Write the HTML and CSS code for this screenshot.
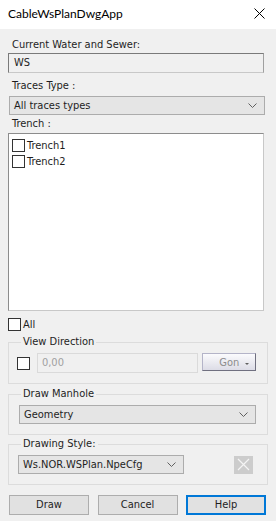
FILE: index.html
```html
<!DOCTYPE html>
<html lang="en">

<head>
    <meta charset="UTF-8">
    <meta name="viewport" content="width=device-width, initial-scale=1.0">
    <title>CableWsPlanDwgApp</title>
    <link rel="stylesheet" href="styles.css">
</head>

<body>
    <div id="window">
        <div class="titlebar">
            <span class="title">CableWsPlanDwgApp</span>
            <svg class="close" width="11" height="11" viewBox="0 0 11 11">
                <path d="M0.5 0.5 L10.5 10.5 M10.5 0.5 L0.5 10.5" stroke="#000" stroke-width="1" fill="none" />
            </svg>
        </div>

        <div id="content">
            <div class="label first">Current Water and Sewer:</div>
            <div class="textbox">WS</div>

            <div class="label">Traces Type :</div>
            <div class="combo wide">
                <span>All traces types</span>
                <svg class="chevron" width="9" height="5" viewBox="0 0 9 5">
                    <path d="M0.5 0.5 L4.5 4.5 L8.5 0.5" stroke="#606060" fill="none" />
                </svg>
            </div>

            <div class="label tight">Trench :</div>
            <div class="listbox">
                <div class="item"><span class="check"></span>Trench1</div>
                <div class="item"><span class="check"></span>Trench2</div>
            </div>

            <div class="allrow"><span class="check"></span>All</div>

            <fieldset class="group direction">
                <legend>View Direction</legend>
                <div class="dirrow">
                    <span class="check big"></span>
                    <div class="angle">0,00</div>
                    <div class="gon">Gon<span class="drop"></span></div>
                </div>
            </fieldset>

            <fieldset class="group">
                <legend>Draw Manhole</legend>
                <div class="combo inner">
                    <span>Geometry</span>
                    <svg class="chevron" width="9" height="5" viewBox="0 0 9 5">
                        <path d="M0.5 0.5 L4.5 4.5 L8.5 0.5" stroke="#606060" fill="none" />
                    </svg>
                </div>
            </fieldset>

            <fieldset class="group">
                <legend>Drawing Style:</legend>
                <div class="stylerow">
                    <div class="combo short">
                        <span>Ws.NOR.WSPlan.NpeCfg</span>
                        <svg class="chevron" width="9" height="5" viewBox="0 0 9 5">
                            <path d="M0.5 0.5 L4.5 4.5 L8.5 0.5" stroke="#606060" fill="none" />
                        </svg>
                    </div>
                    <div class="xbtn">
                        <svg width="13" height="13" viewBox="0 0 13 13">
                            <path d="M1 1 L12 12 M12 1 L1 12" stroke="#f4f4f4" stroke-width="1.2" fill="none" />
                        </svg>
                    </div>
                </div>
            </fieldset>

            <div class="buttons">
                <div class="btn">Draw</div>
                <div class="btn">Cancel</div>
                <div class="btn default">Help</div>
            </div>
        </div>
    </div>
</body>

</html>
```

FILE: styles.css
```css
body {
    margin: 0;
    background-color: #f0f0f0;
    font-family: "DejaVu Sans", sans-serif;
    font-stretch: condensed;
    font-size: 11px;
    color: #1e1e1e;
}

#window {
    width: 276px;
    height: 521px;
    overflow: hidden;
}

.titlebar {
    display: flex;
    justify-content: space-between;
    align-items: center;
    height: 29px;
    padding: 0 11px 2px 8px;
    background-color: #fff;
    box-sizing: border-box;
}

.title {
    font-family: Lato, "Noto Sans", sans-serif;
    font-stretch: normal;
    font-size: 12px;
    color: #000;
}

#content {
    display: flex;
    flex-direction: column;
    padding: 0 8px 0 8px;
}

.label {
    height: 14px;
    line-height: 14px;
    margin: 6px 0 3px 4px;
}

.label.first {
    margin: 9px 0 1px 4px;
}

.label.tight {
    margin: 2px 0 2px 4px;
}

.textbox {
    height: 20px;
    line-height: 18px;
    padding-left: 5px;
    border: 1px solid #7a7a7a;
    border-right-color: #a0a0a0;
    border-bottom-color: #c8c8c8;
    box-sizing: border-box;
    margin-right: 4px;
}

.combo {
    display: flex;
    justify-content: space-between;
    align-items: center;
    height: 19px;
    padding: 0 7px 0 4px;
    background-color: #e5e5e5;
    border: 1px solid #acacac;
    box-sizing: border-box;
}

.combo.wide {
    margin: 0 3px 0 1px;
}

.chevron {
    display: block;
}

.listbox {
    height: 178px;
    background-color: #fff;
    border: 1px solid #828282;
    border-color: #8c8c8c #c8c8c8 #c8c8c8 #8c8c8c;
    box-sizing: border-box;
    margin-right: 4px;
    padding: 3px 0 0 3px;
}

.item {
    display: flex;
    align-items: center;
    height: 16px;
}

.check {
    width: 13px;
    height: 13px;
    border: 1px solid #333;
    background-color: #fff;
    box-sizing: border-box;
    margin-right: 2px;
}

.allrow {
    display: flex;
    align-items: center;
    height: 13px;
    margin: 7px 0 4px 0;
}

.group {
    margin: 0 0 2px 0;
    padding: 4px 11px 10px 8px;
    border: 1px solid #dcdcdc;
    min-width: 0;
}

.group.direction {
    margin-bottom: 3px;
}

.group legend {
    padding: 0 2px;
    margin-left: 4px;
    line-height: 14px;
}

.dirrow {
    display: flex;
    align-items: center;
    height: 20px;
}

.check.big {
    margin: 0 7px 0 0;
}

.angle {
    width: 163px;
    height: 20px;
    line-height: 18px;
    padding-left: 4px;
    color: #a0a0a0;
    border: 1px solid #dadada;
    box-sizing: border-box;
}

.gon {
    display: flex;
    justify-content: center;
    align-items: center;
    position: relative;
    width: 54px;
    height: 18px;
    margin: 0 0 2px 4px;
    color: #8c8c8c;
    border: 1px solid #b4b4c8;
    border-right-color: #707080;
    border-bottom-color: #707080;
    background: linear-gradient(#fbfbfd, #dcdce6);
    box-sizing: border-box;
}

.drop {
    position: absolute;
    right: 6px;
    bottom: 5px;
    border-left: 2px solid transparent;
    border-right: 2px solid transparent;
    border-top: 2px solid #606060;
}

.combo.inner {
    margin-left: 2px;
}

.stylerow {
    display: flex;
    justify-content: space-between;
    align-items: center;
}

.combo.short {
    width: 166px;
    margin-left: 1px;
}

.xbtn {
    display: flex;
    justify-content: center;
    align-items: center;
    width: 19px;
    height: 18px;
    margin-right: 3px;
    background-color: #cccccc;
}

.buttons {
    display: flex;
    justify-content: space-between;
    margin: 8px 2px 0 1px;
}

.btn {
    width: 80px;
    height: 20px;
    line-height: 18px;
    text-align: center;
    background-color: #e1e1e1;
    border: 1px solid #adadad;
    box-sizing: border-box;
}

.btn.default {
    border: 2px solid #0078d7;
    line-height: 16px;
}
```
